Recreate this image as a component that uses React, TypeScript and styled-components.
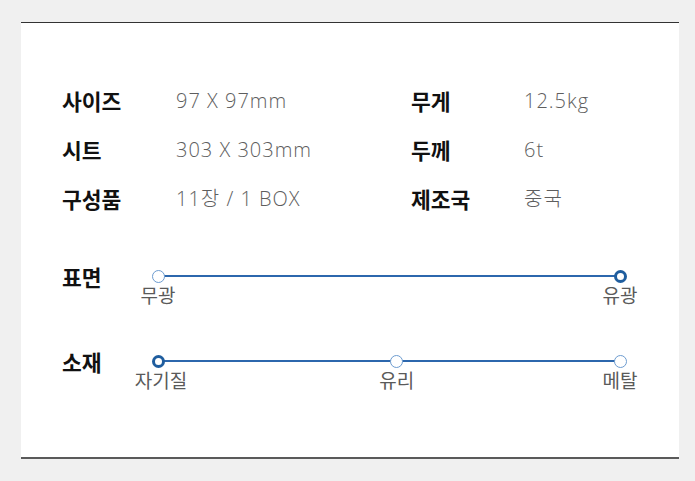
import React from "react";
import styled, { createGlobalStyle } from "styled-components";

const Global = createGlobalStyle`
  html, body { margin: 0; padding: 0; background: #f0f0f0; }
  body { font-family: "Noto Sans", "Noto Sans CJK KR", sans-serif; }
`;

const Page = styled.div`
  width: 695px;
  height: 481px;
  padding: 22px 16px 0 21px;
  box-sizing: border-box;
`;

const Card = styled.div`
  width: 658px;
  height: 437px;
  box-sizing: border-box;
  background: #fff;
  border-top: 1.5px solid #333;
  border-bottom: 2px solid #5a5a5a;
  padding: 53px 0 0 41px;
`;

const Specs = styled.div`
  display: grid;
  grid-template-columns: 114px 235px 113px 1fr;
  grid-auto-rows: 49px;
  align-items: center;
`;

const Label = styled.div`
  font-family: "Noto Sans CJK KR", sans-serif;
  font-weight: 700;
  font-size: 21.5px;
  color: #111;
  line-height: 1;
`;

const Value = styled.div`
  font-family: "Open Sans", "Noto Sans CJK KR", sans-serif;
  font-weight: 300;
  font-size: 20px;
  color: #5e5e5e;
  line-height: 1;
  letter-spacing: 1px;
`;

const Scales = styled.div`
  margin-top: 47px;
  display: flex;
  flex-direction: column;
  gap: 61px;
`;

const ScaleRow = styled.div`
  display: flex;
  align-items: flex-start;
`;

const ScaleLabel = styled(Label)`
  width: 90px;
  margin-top: -4px;
`;

const Track = styled.div`
  position: relative;
  width: 474px;
  height: 24px;
`;

const Line = styled.div`
  position: absolute;
  left: 6px;
  right: 6px;
  top: 5px;
  height: 2px;
  background: #2c67ad;
`;

const Dot = styled.div<{ $on?: boolean }>`
  position: absolute;
  top: -0.5px;
  width: 13px;
  height: 13px;
  margin-left: -6.5px;
  box-sizing: border-box;
  border-radius: 50%;
  background: #fff;
  border: ${(p) => (p.$on ? "3px solid #1f5d9e" : "1.3px solid #6d9cd0")};
`;

const DotText = styled.div`
  position: absolute;
  top: 12px;
  transform: translateX(-50%);
  white-space: nowrap;
  font-family: "Noto Sans CJK KR", sans-serif;
  font-size: 19px;
  color: #5a5a5a;
  line-height: 26px;
`;

type Stop = { text: string; pos: number; on?: boolean; dx?: number };

const Scale = ({ label, stops }: { label: string; stops: Stop[] }) => (
  <ScaleRow>
    <ScaleLabel>{label}</ScaleLabel>
    <Track>
      <Line />
      {stops.map((s) => (
        <React.Fragment key={s.text}>
          <Dot $on={s.on} style={{ left: 6 + s.pos * 462 }} />
          <DotText style={{ left: 6 + s.pos * 462 + (s.dx || 0) }}>{s.text}</DotText>
        </React.Fragment>
      ))}
    </Track>
  </ScaleRow>
);

export default function App() {
  return (
    <>
      <Global />
      <Page>
        <Card>
          <Specs>
            <Label>사이즈</Label>
            <Value>97 X 97mm</Value>
            <Label>무게</Label>
            <Value>12.5kg</Value>
            <Label>시트</Label>
            <Value>303 X 303mm</Value>
            <Label>두께</Label>
            <Value>6t</Value>
            <Label>구성품</Label>
            <Value>11장 / 1 BOX</Value>
            <Label>제조국</Label>
            <Value>중국</Value>
          </Specs>
          <Scales>
            <Scale
              label="표면"
              stops={[
                { text: "무광", pos: 0 },
                { text: "유광", pos: 1, on: true },
              ]}
            />
            <Scale
              label="소재"
              stops={[
                { text: "자기질", pos: 0, on: true, dx: 3 },
                { text: "유리", pos: 0.517 },
                { text: "메탈", pos: 1 },
              ]}
            />
          </Scales>
        </Card>
      </Page>
    </>
  );
}
